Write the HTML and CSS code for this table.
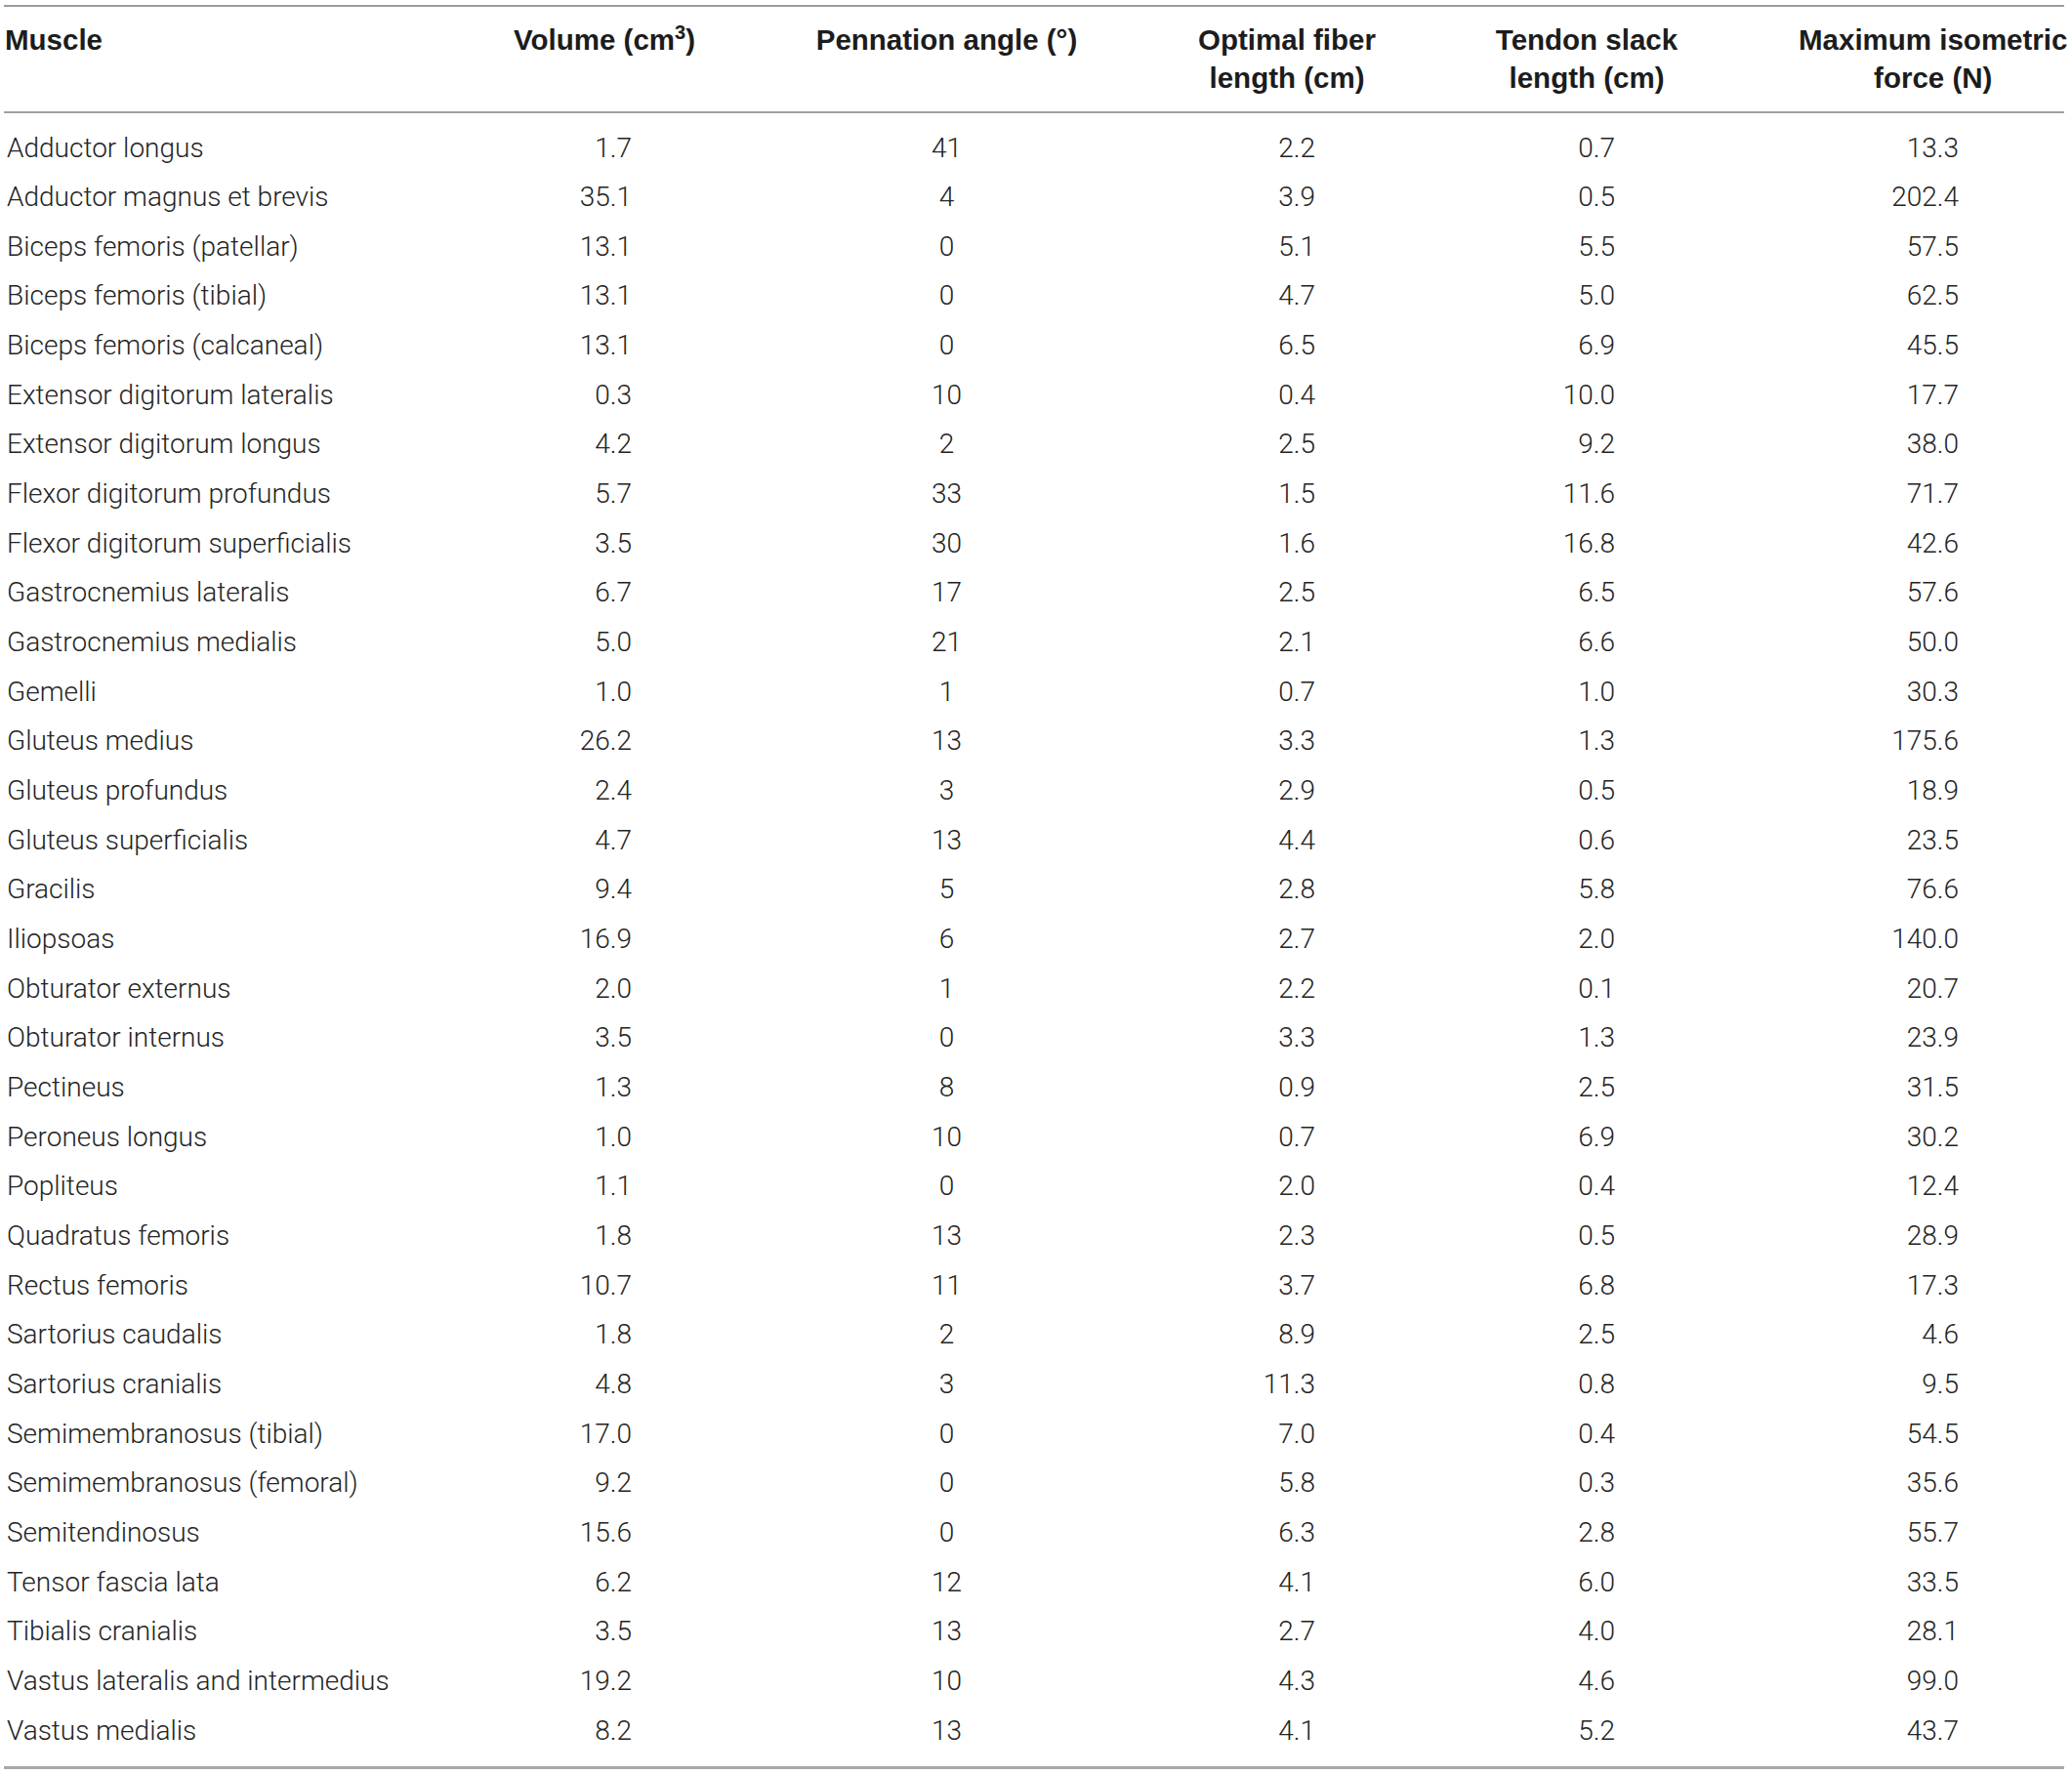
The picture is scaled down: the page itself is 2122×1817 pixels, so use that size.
FILE: index.html
```html
<!DOCTYPE html>
<html>
<head>
<meta charset="utf-8">
<link rel="stylesheet" href="styles.css">
</head>
<body>
<table class="data">
<colgroup>
<col class="c1"><col class="c2"><col class="c3"><col class="c4"><col class="c5"><col class="c6">
</colgroup>
<thead>
<tr>
<th class="h1">Muscle</th>
<th class="h2">Volume (cm<sup>3</sup>)</th>
<th class="h3">Pennation angle (°)</th>
<th class="h4">Optimal fiber<br>length (cm)</th>
<th class="h5">Tendon slack<br>length (cm)</th>
<th class="h6"><span class="h6-inner">Maximum isometric<br>force (N)</span></th>
</tr>
</thead>
<tbody>
<tr><td>Adductor longus</td><td>1.7</td><td>41</td><td>2.2</td><td>0.7</td><td>13.3</td></tr>
<tr><td>Adductor magnus et brevis</td><td>35.1</td><td>4</td><td>3.9</td><td>0.5</td><td>202.4</td></tr>
<tr><td>Biceps femoris (patellar)</td><td>13.1</td><td>0</td><td>5.1</td><td>5.5</td><td>57.5</td></tr>
<tr><td>Biceps femoris (tibial)</td><td>13.1</td><td>0</td><td>4.7</td><td>5.0</td><td>62.5</td></tr>
<tr><td>Biceps femoris (calcaneal)</td><td>13.1</td><td>0</td><td>6.5</td><td>6.9</td><td>45.5</td></tr>
<tr><td>Extensor digitorum lateralis</td><td>0.3</td><td>10</td><td>0.4</td><td>10.0</td><td>17.7</td></tr>
<tr><td>Extensor digitorum longus</td><td>4.2</td><td>2</td><td>2.5</td><td>9.2</td><td>38.0</td></tr>
<tr><td>Flexor digitorum profundus</td><td>5.7</td><td>33</td><td>1.5</td><td>11.6</td><td>71.7</td></tr>
<tr><td>Flexor digitorum superficialis</td><td>3.5</td><td>30</td><td>1.6</td><td>16.8</td><td>42.6</td></tr>
<tr><td>Gastrocnemius lateralis</td><td>6.7</td><td>17</td><td>2.5</td><td>6.5</td><td>57.6</td></tr>
<tr><td>Gastrocnemius medialis</td><td>5.0</td><td>21</td><td>2.1</td><td>6.6</td><td>50.0</td></tr>
<tr><td>Gemelli</td><td>1.0</td><td>1</td><td>0.7</td><td>1.0</td><td>30.3</td></tr>
<tr><td>Gluteus medius</td><td>26.2</td><td>13</td><td>3.3</td><td>1.3</td><td>175.6</td></tr>
<tr><td>Gluteus profundus</td><td>2.4</td><td>3</td><td>2.9</td><td>0.5</td><td>18.9</td></tr>
<tr><td>Gluteus superficialis</td><td>4.7</td><td>13</td><td>4.4</td><td>0.6</td><td>23.5</td></tr>
<tr><td>Gracilis</td><td>9.4</td><td>5</td><td>2.8</td><td>5.8</td><td>76.6</td></tr>
<tr><td>Iliopsoas</td><td>16.9</td><td>6</td><td>2.7</td><td>2.0</td><td>140.0</td></tr>
<tr><td>Obturator externus</td><td>2.0</td><td>1</td><td>2.2</td><td>0.1</td><td>20.7</td></tr>
<tr><td>Obturator internus</td><td>3.5</td><td>0</td><td>3.3</td><td>1.3</td><td>23.9</td></tr>
<tr><td>Pectineus</td><td>1.3</td><td>8</td><td>0.9</td><td>2.5</td><td>31.5</td></tr>
<tr><td>Peroneus longus</td><td>1.0</td><td>10</td><td>0.7</td><td>6.9</td><td>30.2</td></tr>
<tr><td>Popliteus</td><td>1.1</td><td>0</td><td>2.0</td><td>0.4</td><td>12.4</td></tr>
<tr><td>Quadratus femoris</td><td>1.8</td><td>13</td><td>2.3</td><td>0.5</td><td>28.9</td></tr>
<tr><td>Rectus femoris</td><td>10.7</td><td>11</td><td>3.7</td><td>6.8</td><td>17.3</td></tr>
<tr><td>Sartorius caudalis</td><td>1.8</td><td>2</td><td>8.9</td><td>2.5</td><td>4.6</td></tr>
<tr><td>Sartorius cranialis</td><td>4.8</td><td>3</td><td>11.3</td><td>0.8</td><td>9.5</td></tr>
<tr><td>Semimembranosus (tibial)</td><td>17.0</td><td>0</td><td>7.0</td><td>0.4</td><td>54.5</td></tr>
<tr><td>Semimembranosus (femoral)</td><td>9.2</td><td>0</td><td>5.8</td><td>0.3</td><td>35.6</td></tr>
<tr><td>Semitendinosus</td><td>15.6</td><td>0</td><td>6.3</td><td>2.8</td><td>55.7</td></tr>
<tr><td>Tensor fascia lata</td><td>6.2</td><td>12</td><td>4.1</td><td>6.0</td><td>33.5</td></tr>
<tr><td>Tibialis cranialis</td><td>3.5</td><td>13</td><td>2.7</td><td>4.0</td><td>28.1</td></tr>
<tr><td>Vastus lateralis and intermedius</td><td>19.2</td><td>10</td><td>4.3</td><td>4.6</td><td>99.0</td></tr>
<tr><td>Vastus medialis</td><td>8.2</td><td>13</td><td>4.1</td><td>5.2</td><td>43.7</td></tr>
</tbody>
</table>
</body>
</html>
```

FILE: styles.css
```css
html, body {
  margin: 0;
  padding: 0;
  background: #ffffff;
}

body {
  overflow: hidden;
}

.data {
  margin: 5px 0 0 4px;
  width: 2110px;
  table-layout: fixed;
  border-collapse: collapse;
  border-top: 2px solid #9c9c9c;
  border-bottom: 3px solid #a8a8a8;
  color: #222222;
}

.c1 { width: 439px; }
.c2 { width: 352px; }
.c3 { width: 349px; }
.c4 { width: 348px; }
.c5 { width: 266px; }
.c6 { width: 356px; }

.data th {
  font-family: "Liberation Sans", Arial, sans-serif;
  font-weight: bold;
  font-size: 29.5px;
  line-height: 39px;
  color: #1c1c1c;
  vertical-align: top;
  text-align: center;
  white-space: nowrap;
  padding: 14px 0 15px 0;
  border-bottom: 2px solid #a0a0a0;
}

.data th.h1 {
  text-align: left;
  padding-left: 1px;
}

.data th.h6 {
  text-align: left;
  padding-left: 84px;
}

.h6-inner {
  display: inline-block;
  text-align: center;
}

.data th sup {
  font-size: 0.68em;
  line-height: 0;
  vertical-align: 0.55em;
}

.data td {
  font-family: Roboto, "Liberation Sans", sans-serif;
  font-weight: 300;
  font-size: 28px;
  line-height: 50.66px;
  padding: 0;
  white-space: nowrap;
  color: #242424;
}

.data td:nth-child(1) {
  text-align: left;
  padding-left: 3px;
}

.data td:nth-child(2) {
  text-align: right;
  padding-right: 148px;
}

.data td:nth-child(3) {
  text-align: center;
}

.data td:nth-child(4) {
  text-align: right;
  padding-right: 145px;
}

.data td:nth-child(5) {
  text-align: right;
  padding-right: 104px;
}

.data td:nth-child(6) {
  text-align: right;
  padding-right: 108px;
}

.data tbody tr:first-child td {
  padding-top: 10.5px;
}

.data tbody tr:last-child td {
  padding-bottom: 10.5px;
}
```
